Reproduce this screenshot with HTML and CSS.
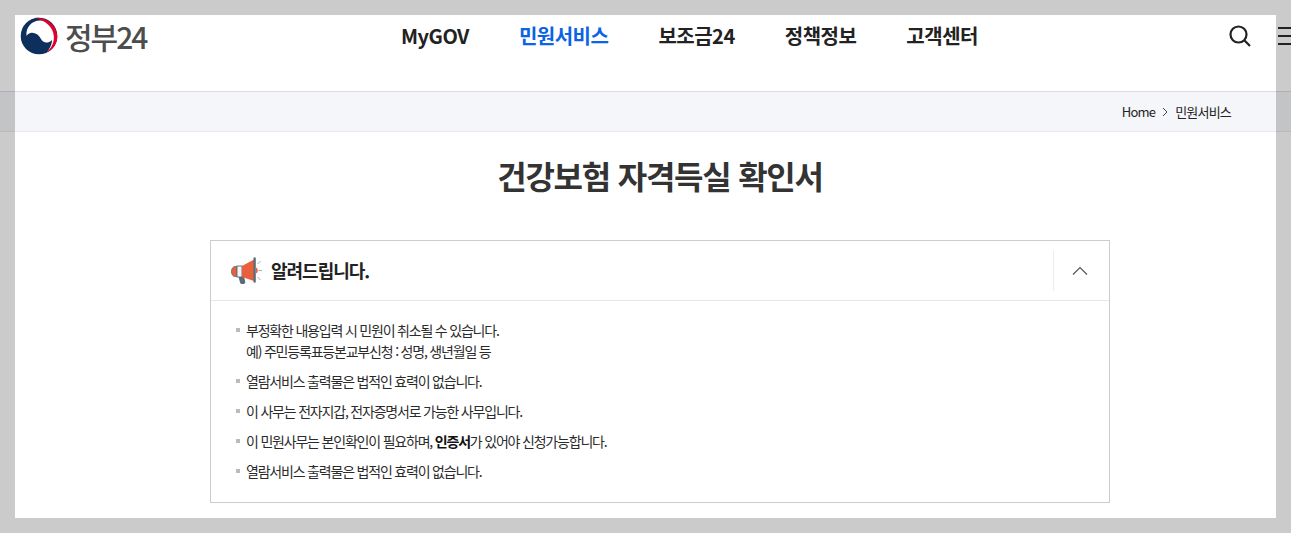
FILE: index.html
```html
<!DOCTYPE html>
<html lang="ko">
<head>
<meta charset="utf-8">
<title>건강보험 자격득실 확인서 | 정부24</title>
<link rel="stylesheet" href="styles.css">
</head>
<body>
<div class="page">
  <header class="header">
    <a class="logo" href="#">
      <svg class="logo-mark" viewBox="0 0 38 38" width="38" height="38" aria-hidden="true">
        <circle cx="19" cy="19" r="18.3" fill="#0c2f5c"/>
        <path d="M6.500 19C5.500 10 12 3.500 20 3.500 28 3.500 34.500 10 35 18 35.300 25 32 31.500 27 35 31 30 32 26 32 23 28 27 23 26 21 22 18.500 17 14 15 10.500 16 8.500 16.500 7.200 17.500 6.500 19Z" fill="#fff"/>
        <path d="M15 .9C27 0 37.500 9 37.300 20 37.200 27 33 33 26.500 35.600 31.500 31 34.300 25.500 33.800 19 33.300 10 25 3 15 .9Z" fill="#e4002b"/>
      </svg>
      <span class="logo-text">정부24</span>
    </a>
    <nav class="nav">
      <a href="#">MyGOV</a>
      <a href="#" class="active">민원서비스</a>
      <a href="#">보조금24</a>
      <a href="#">정책정보</a>
      <a href="#">고객센터</a>
    </nav>
    <div class="tools">
      <svg class="icon-search" viewBox="0 0 22 22" width="22" height="22" aria-hidden="true">
        <circle cx="9.500" cy="9.500" r="8" fill="none" stroke="#222" stroke-width="2.200"/>
        <path d="M15.300 15.300 21 21" stroke="#222" stroke-width="2.200" fill="none"/>
      </svg>
      <span class="burger"><i></i><i></i><i></i></span>
    </div>
  </header>
  <div class="crumbs">
    <span>Home</span>
    <svg viewBox="0 0 6 10" width="6" height="10" aria-hidden="true"><path d="M1 1l4 4-4 4" fill="none" stroke="#444" stroke-width="1"/></svg>
    <span>민원서비스</span>
  </div>
  <main class="main">
    <h1 class="title">건강보험 자격득실 확인서</h1>
    <section class="notice">
      <div class="notice-head">
        <svg class="horn" viewBox="0 0 31 27" width="31" height="27" aria-hidden="true">
          <path d="M7.500 19.500h5.500l1.300 5.500c.4 2.500-4.800 3-5.300.5Z" fill="#5d6b78"/>
          <path d="M6 9.500H4.500C2 9.500.5 11.500.5 14.500S2 19.500 4.500 19.500H6Z" fill="#e8613c" stroke="#5d6b78" stroke-width=".9"/>
          <rect x="6" y="9" width="5" height="11" fill="#f4f4f4" stroke="#5d6b78" stroke-width=".9"/>
          <path d="M11 9 23 2.500V24L11 20Z" fill="#e8613c"/>
          <rect x="22.500" y=".3" width="2.300" height="25.500" rx="1.100" fill="#5d6b78"/>
          <path d="M25 10.500c2.300.5 2.300 5.500 0 6Z" fill="#e8613c"/>
          <path d="M26.500 7l3-3M27.500 13.500h3.500M26.500 20l3 3" stroke="#a6adb4" stroke-width="1" fill="none"/>
        </svg>
        <h2 class="notice-title">알려드립니다.</h2>
        <button class="toggle" type="button" aria-label="접기">
          <svg viewBox="0 0 16 10" width="16" height="10" aria-hidden="true"><path d="M1 8.500 8 1.500l7 7" fill="none" stroke="#555" stroke-width="1.200"/></svg>
        </button>
      </div>
      <ul class="notice-list">
        <li>부정확한 내용입력 시 민원이 취소될 수 있습니다.<br>예) 주민등록표등본교부신청 : 성명, 생년월일 등</li>
        <li>열람서비스 출력물은 법적인 효력이 없습니다.</li>
        <li>이 사무는 전자지갑, 전자증명서로 가능한 사무입니다.</li>
        <li>이 민원사무는 본인확인이 필요하며, <strong>인증서</strong>가 있어야 신청가능합니다.</li>
        <li>열람서비스 출력물은 법적인 효력이 없습니다.</li>
      </ul>
    </section>
  </main>
</div>
</body>
</html>
```
FILE: styles.css
```css
* { box-sizing: border-box; }
html, body { margin: 0; height: 100%; }
body {
  background: #cbcbcb;
  font-family: "Noto Sans CJK KR", "Noto Sans", sans-serif;
  color: #222;
  overflow: hidden;
}
a { color: inherit; text-decoration: none; }
.page { padding: 15px; }
.header {
  height: 76px;
  background: #fff;
  display: flex;
  align-items: flex-start;
  position: relative;
}
.logo { display: flex; align-items: center; gap: 7px; padding: 2px 0 0 5px; height: 40px; }
.logo-text { font-size: 30px; color: #4d4d4d; letter-spacing: -2px; font-weight: 500; line-height: 36px; }
.nav {
  position: absolute;
  left: 386px;
  top: 6px;
  display: flex;
  gap: 50px;
  font-size: 20px;
  font-weight: 700;
  letter-spacing: -0.5px;
  line-height: 30px;
  color: #222;
}
.nav .active { color: #0b63e5; }
.tools { margin-left: auto; display: flex; align-items: center; gap: 27px; margin-right: -16px; padding-top: 10px; }
.burger { display: flex; flex-direction: column; justify-content: space-between; width: 14px; height: 18px; }
.burger i { display: block; height: 2px; background: #222; }
.crumbs {
  margin: 0 -15px;
  height: 41px;
  padding-right: 60px;
  background: linear-gradient(to right, #c3c4c6 15px, #f4f6fa 15px, #f4f6fa 1276px, #c3c4c6 1276px);
  border-top: 1px solid rgba(0, 0, 40, 0.1);
  border-bottom: 1px solid rgba(0, 0, 40, 0.05);
  display: flex;
  justify-content: flex-end;
  align-items: center;
  gap: 7px;
  font-size: 13px;
  letter-spacing: -0.8px;
  color: #222;
}
.main { background: #fff; height: 386px; padding: 19px 0 0 29px; display: flex; flex-direction: column; align-items: center; }
.title { margin: 0; font-size: 32px; line-height: 48px; font-weight: 700; letter-spacing: -1.25px; color: #333; }
.notice { width: 900px; margin-top: 41px; border: 1px solid #ccc; }
.notice-head {
  height: 60px;
  border-bottom: 1px solid #e6e6e6;
  display: flex;
  align-items: center;
  padding-left: 20px;
  gap: 9px;
}
.notice-title { margin: 0; padding-bottom: 2px; font-size: 18px; font-weight: 700; letter-spacing: -1px; color: #222; }
.toggle {
  margin-left: auto;
  width: 56px;
  height: 40px;
  border: 0;
  border-left: 1px solid #ececec;
  background: none;
  padding: 0 4px 0 0;
  display: flex;
  align-items: center;
  justify-content: center;
}
.notice-list { list-style: none; margin: 0; padding: 19px 25px 20px; font-size: 14px; line-height: 21px; letter-spacing: -1.2px; color: #2b2b2b; }
.notice-list li { position: relative; padding-left: 10px; margin-bottom: 9px; }
.notice-list li:last-child { margin-bottom: 0; }
.notice-list li::before { content: ""; position: absolute; left: 0; top: 8px; width: 4px; height: 4px; background: #bbb; }
.notice-list strong { color: #111; font-weight: 700; }
```
